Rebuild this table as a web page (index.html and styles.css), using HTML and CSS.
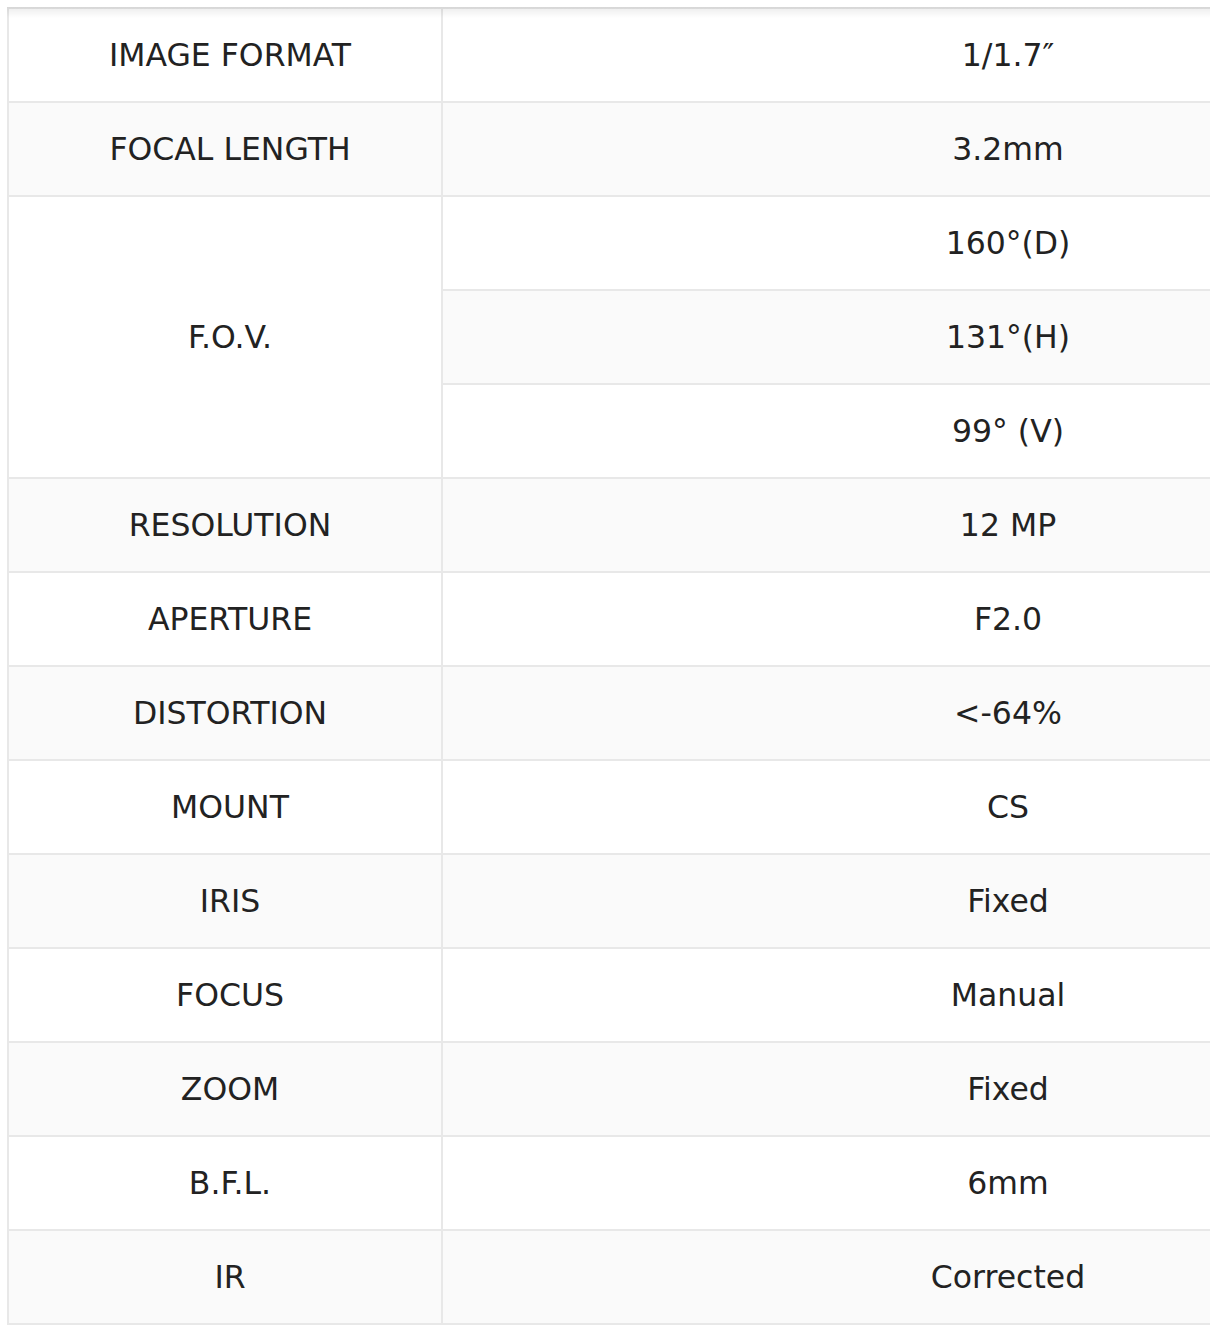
FILE: index.html
```html
<!DOCTYPE html>
<html>
<head>
<meta charset="utf-8">
<link rel="stylesheet" href="styles.css">
</head>
<body>
<div class="wrap">
<table class="spec">
<colgroup><col class="c1"><col class="c2"></colgroup>
<tbody>
<tr class="odd"><td class="k">IMAGE FORMAT</td><td class="v">1/1.7″</td></tr>
<tr class="even"><td class="k">FOCAL LENGTH</td><td class="v">3.2mm</td></tr>
<tr class="odd"><td class="k fov" rowspan="3">F.O.V.</td><td class="v">160°(D)</td></tr>
<tr class="even"><td class="v">131°(H)</td></tr>
<tr class="odd"><td class="v">99° (V)</td></tr>
<tr class="even"><td class="k">RESOLUTION</td><td class="v">12 MP</td></tr>
<tr class="odd"><td class="k">APERTURE</td><td class="v">F2.0</td></tr>
<tr class="even"><td class="k">DISTORTION</td><td class="v">&lt;-64%</td></tr>
<tr class="odd"><td class="k">MOUNT</td><td class="v">CS</td></tr>
<tr class="even"><td class="k">IRIS</td><td class="v">Fixed</td></tr>
<tr class="odd"><td class="k">FOCUS</td><td class="v">Manual</td></tr>
<tr class="even"><td class="k">ZOOM</td><td class="v">Fixed</td></tr>
<tr class="odd"><td class="k">B.F.L.</td><td class="v">6mm</td></tr>
<tr class="even"><td class="k">IR</td><td class="v">Corrected</td></tr>
</tbody>
</table>
</div>
</body>
</html>
```

FILE: styles.css
```css
html, body {
  margin: 0;
  padding: 0;
  background: #fff;
  overflow: hidden;
}
.wrap {
  position: relative;
  margin: 7px 0 0 7px;
  overflow: hidden;
}
.wrap::after {
  content: "";
  position: absolute;
  left: 0;
  right: 0;
  top: 0;
  height: 11px;
  background: linear-gradient(rgba(0,0,0,0.075), rgba(0,0,0,0));
  pointer-events: none;
}
.spec {
  border-collapse: collapse;
  table-layout: fixed;
  width: 1566px;
  font-family: "DejaVu Sans", Verdana, sans-serif;
  font-size: 31.5px;
  color: #222;
}
.c1 { width: 434px; }
.c2 { width: 1132px; }
.spec td {
  height: 94px;
  padding: 2px 0 0 10px;
  border: 2px solid #e8e8e8;
  text-align: center;
  vertical-align: middle;
  line-height: 1;
  box-sizing: border-box;
}
.spec td.k { padding-left: 10px; }
.spec td.v { padding-left: 0; }
.spec tr.odd td { background: #fff; }
.spec tr.even td { background: #fafafa; }
.spec td.fov { background: #fff; }
```
